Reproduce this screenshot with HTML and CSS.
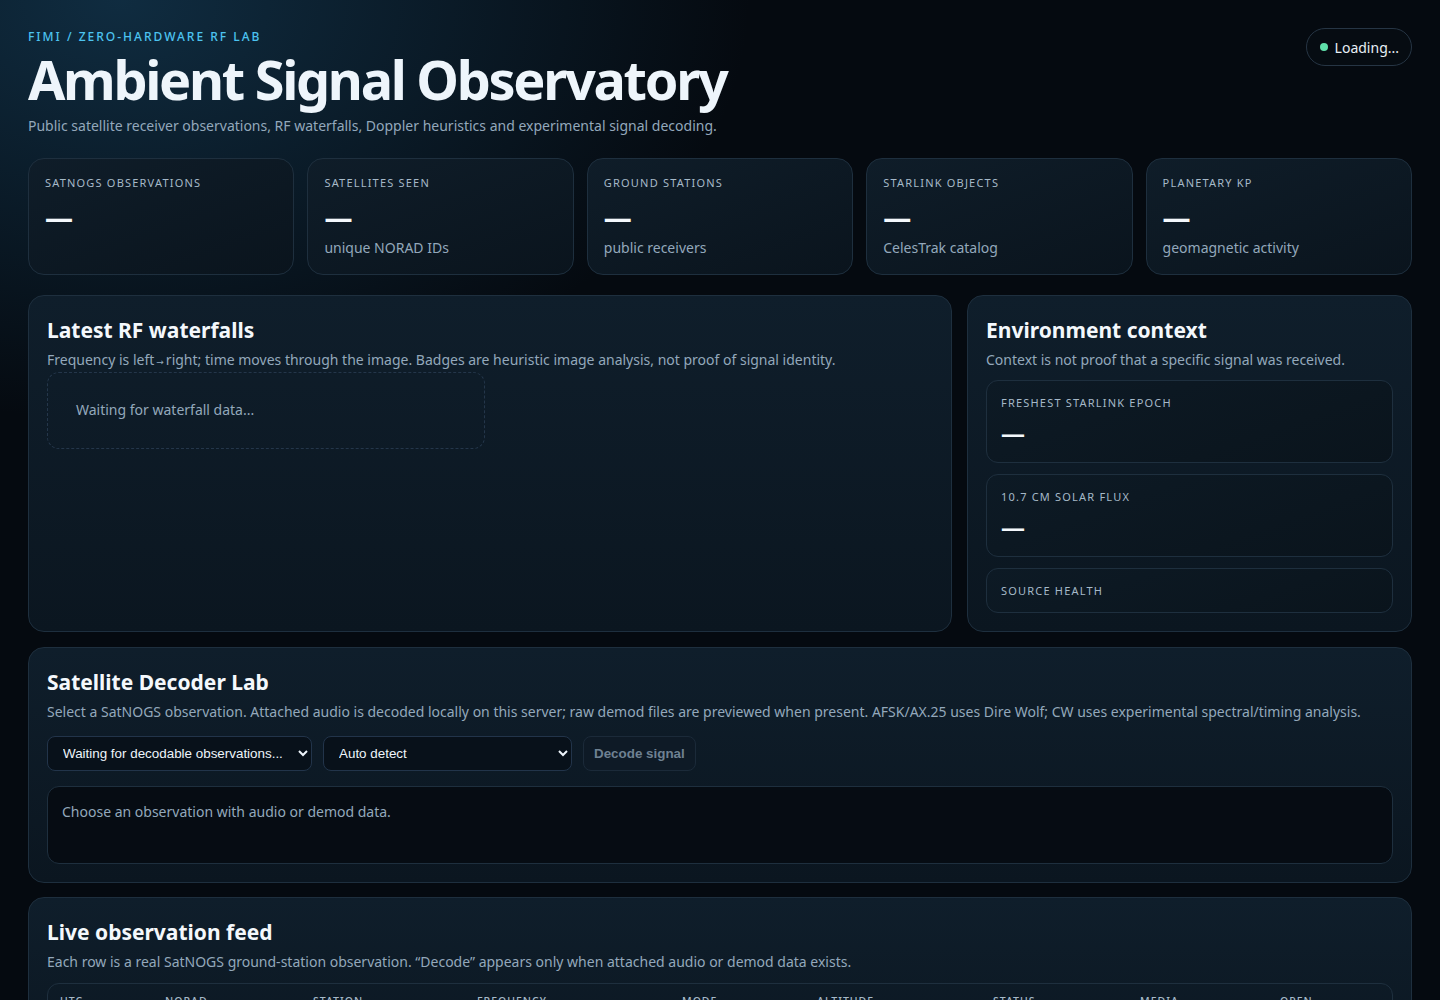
FILE: index.html
```html
<!DOCTYPE html>
<html lang="en">
<head>
<meta charset="utf-8">
<title>Ambient Signal Observatory</title>
<link rel="stylesheet" href="styles.css">
</head>
<body>
<main class="page">
  <header class="hero">
    <div class="hero-text">
      <div class="eyebrow">FIMI / ZERO-HARDWARE RF LAB</div>
      <h1 class="title">Ambient Signal Observatory</h1>
      <p class="lede">Public satellite receiver observations, RF waterfalls, Doppler heuristics and experimental signal decoding.</p>
    </div>
    <div class="status-pill"><span class="dot"></span>Loading...</div>
  </header>

  <section class="stats">
    <div class="stat">
      <div class="label">SATNOGS OBSERVATIONS</div>
      <div class="value">—</div>
      <div class="sub"></div>
    </div>
    <div class="stat">
      <div class="label">SATELLITES SEEN</div>
      <div class="value">—</div>
      <div class="sub">unique NORAD IDs</div>
    </div>
    <div class="stat">
      <div class="label">GROUND STATIONS</div>
      <div class="value">—</div>
      <div class="sub">public receivers</div>
    </div>
    <div class="stat">
      <div class="label">STARLINK OBJECTS</div>
      <div class="value">—</div>
      <div class="sub">CelesTrak catalog</div>
    </div>
    <div class="stat">
      <div class="label">PLANETARY KP</div>
      <div class="value">—</div>
      <div class="sub">geomagnetic activity</div>
    </div>
  </section>

  <section class="split">
    <div class="panel">
      <h2 class="panel-title">Latest RF waterfalls</h2>
      <p class="panel-desc">Frequency is left<span class="arrow">→</span>right; time moves through the image. Badges are heuristic image analysis, not proof of signal identity.</p>
      <div class="waterfalls">
        <div class="empty">Waiting for waterfall data...</div>
      </div>
    </div>
    <div class="panel">
      <h2 class="panel-title">Environment context</h2>
      <p class="panel-desc">Context is not proof that a specific signal was received.</p>
      <div class="env-list">
        <div class="env-card">
          <div class="label">FRESHEST STARLINK EPOCH</div>
          <div class="env-value">—</div>
        </div>
        <div class="env-card">
          <div class="label">10.7 CM SOLAR FLUX</div>
          <div class="env-value">—</div>
        </div>
        <div class="env-card">
          <div class="label">SOURCE HEALTH</div>
        </div>
      </div>
    </div>
  </section>

  <section class="panel decoder">
    <h2 class="panel-title">Satellite Decoder Lab</h2>
    <p class="panel-desc">Select a SatNOGS observation. Attached audio is decoded locally on this server; raw demod files are previewed when present. AFSK/AX.25 uses Dire Wolf; CW uses experimental spectral/timing analysis.</p>
    <div class="controls">
      <select class="select select-obs"><option>Waiting for decodable observations...</option></select>
      <select class="select select-mode"><option>Auto detect</option></select>
      <button class="btn" disabled>Decode signal</button>
    </div>
    <div class="output">Choose an observation with audio or demod data.</div>
  </section>

  <section class="panel feed">
    <h2 class="panel-title">Live observation feed</h2>
    <p class="panel-desc">Each row is a real SatNOGS ground-station observation. “Decode” appears only when attached audio or demod data exists.</p>
    <div class="table-wrap">
      <table class="table">
        <thead>
          <tr>
            <th class="c-utc">UTC</th>
            <th class="c-norad">NORAD</th>
            <th class="c-station">STATION</th>
            <th class="c-freq">FREQUENCY</th>
            <th class="c-mode">MODE</th>
            <th class="c-alt">ALTITUDE</th>
            <th class="c-status">STATUS</th>
            <th class="c-media">MEDIA</th>
            <th class="c-open">OPEN</th>
          </tr>
        </thead>
        <tbody>
          <tr><td colspan="9" class="empty-row">Waiting for observations...</td></tr>
        </tbody>
      </table>
    </div>
  </section>
</main>
</body>
</html>
```

FILE: styles.css
```css
* { box-sizing: border-box; }

html, body {
  margin: 0;
  padding: 0;
}

body {
  background-color: #050a10;
  background-image:
    radial-gradient(ellipse 900px 600px at 120px 0px, rgba(24, 72, 104, 0.55), rgba(24, 72, 104, 0) 70%);
  background-repeat: no-repeat;
  color: #eef5fb;
  font-family: "Noto Sans", "Open Sans", sans-serif;
  min-height: 1000px;
}

.page {
  padding: 28px 28px 40px;
}

.hero {
  display: flex;
  justify-content: space-between;
  align-items: flex-start;
}

.eyebrow {
  color: #4cc3f0;
  font-size: 12px;
  font-weight: 500;
  letter-spacing: 2px;
  line-height: 17px;
}

.title {
  margin: 3px 0 0;
  font-size: 54px;
  line-height: 62px;
  font-weight: 700;
  letter-spacing: -2.3px;
  color: #eef5fb;
}

.lede {
  margin: 5px 0 0;
  font-size: 14px;
  line-height: 22px;
  color: #93a8bb;
}

.status-pill {
  display: flex;
  align-items: center;
  gap: 7px;
  height: 38px;
  padding: 0 12px 0 13px;
  border: 1px solid #263544;
  border-radius: 19px;
  font-size: 14px;
  color: #e8f0f6;
  background: #060c12;
}

.dot {
  width: 8px;
  height: 8px;
  border-radius: 50%;
  background: #5fe0aa;
}

.stats {
  margin-top: 21px;
  display: grid;
  grid-template-columns: repeat(5, minmax(0, 1fr));
  gap: 13px;
}

.stat {
  height: 117px;
  padding: 17px 16px;
  border: 1px solid #1e2f3e;
  border-radius: 16px;
  background: linear-gradient(160deg, #0f1d29, #0a141d);
}

.label {
  font-size: 11px;
  line-height: 14px;
  letter-spacing: 1.2px;
  color: #a6b9c8;
}

.value {
  margin-top: 12px;
  font-size: 28px;
  line-height: 30px;
  font-weight: 700;
  color: #f4f8fc;
}

.sub {
  margin-top: 6px;
  font-size: 14px;
  line-height: 20px;
  color: #93a8bb;
}

.split {
  margin-top: 20px;
  display: grid;
  grid-template-columns: minmax(0, 1fr) 445px;
  gap: 15px;
}

.panel {
  border: 1px solid #1e2f3e;
  border-radius: 16px;
  padding: 18px 18px 18px;
  background: linear-gradient(180deg, #0f1e2b, #0b1620);
}

.panel-title {
  margin: 0;
  font-size: 21px;
  line-height: 32px;
  font-weight: 700;
  color: #f4f8fc;
}

.panel-desc {
  margin: 4px 0 0;
  font-size: 14px;
  line-height: 20px;
  color: #93a8bb;
}

.arrow {
  font-family: "DejaVu Sans", sans-serif;
  font-size: 9px;
  padding: 0 2px;
}

.waterfalls {
  margin-top: 0;
  display: grid;
  grid-template-columns: repeat(2, minmax(0, 1fr));
  gap: 10px;
}

.empty {
  height: 77px;
  padding: 26px 28px;
  border: 1px dashed #24364a;
  border-radius: 12px;
  font-size: 14px;
  line-height: 22px;
  color: #93a8bb;
}

.env-list {
  margin-top: 10px;
  display: flex;
  flex-direction: column;
  gap: 11px;
}

.env-card {
  padding: 15px 14px 14px;
  border: 1px solid #1e2f3e;
  border-radius: 12px;
  background: linear-gradient(160deg, #0d1a25, #0a141c);
}

.env-value {
  margin-top: 8px;
  font-size: 24px;
  line-height: 30px;
  font-weight: 700;
  color: #f4f8fc;
}

.decoder {
  margin-top: 15px;
}

.controls {
  margin-top: 14px;
  display: flex;
  gap: 11px;
}

.select {
  height: 35px;
  padding: 0 10px 0 11px;
  border: 1px solid #22344a;
  border-radius: 8px;
  background: #08111a;
  color: #eef5fb;
  font-family: "Liberation Sans", Arial, sans-serif;
  font-size: 13.4px;
  color-scheme: dark;
}

.select-obs { width: 265px; }
.select-mode { width: 249px; }

.btn {
  height: 35px;
  padding: 0 10px;
  border: 1px solid #1b2a39;
  border-radius: 8px;
  background: #0e1a26;
  color: #6e8192;
  font-family: "Liberation Sans", Arial, sans-serif;
  font-size: 13.4px;
  font-weight: 700;
}

.output {
  margin-top: 15px;
  height: 78px;
  padding: 15px 14px;
  border: 1px solid #1e2f3e;
  border-radius: 12px;
  background: #060c13;
  font-size: 14px;
  line-height: 20px;
  color: #93a8bb;
}

.feed {
  margin-top: 14px;
}

.table-wrap {
  margin-top: 11px;
  border: 1px solid #1e2f3e;
  border-radius: 12px;
  overflow: hidden;
}

.table {
  width: 100%;
  border-collapse: collapse;
  table-layout: fixed;
}

.table th {
  text-align: left;
  padding: 10px 12px;
  font-size: 10.5px;
  font-weight: 500;
  letter-spacing: 1px;
  color: #a6b9c8;
}

.c-utc { width: 105px; }
.c-norad { width: 148px; }
.c-station { width: 164px; }
.c-freq { width: 205px; }
.c-mode { width: 135px; }
.c-alt { width: 176px; }
.c-status { width: 147px; }
.c-media { width: 140px; }

.empty-row {
  padding: 16px 12px;
  font-size: 14px;
  color: #93a8bb;
}
```
